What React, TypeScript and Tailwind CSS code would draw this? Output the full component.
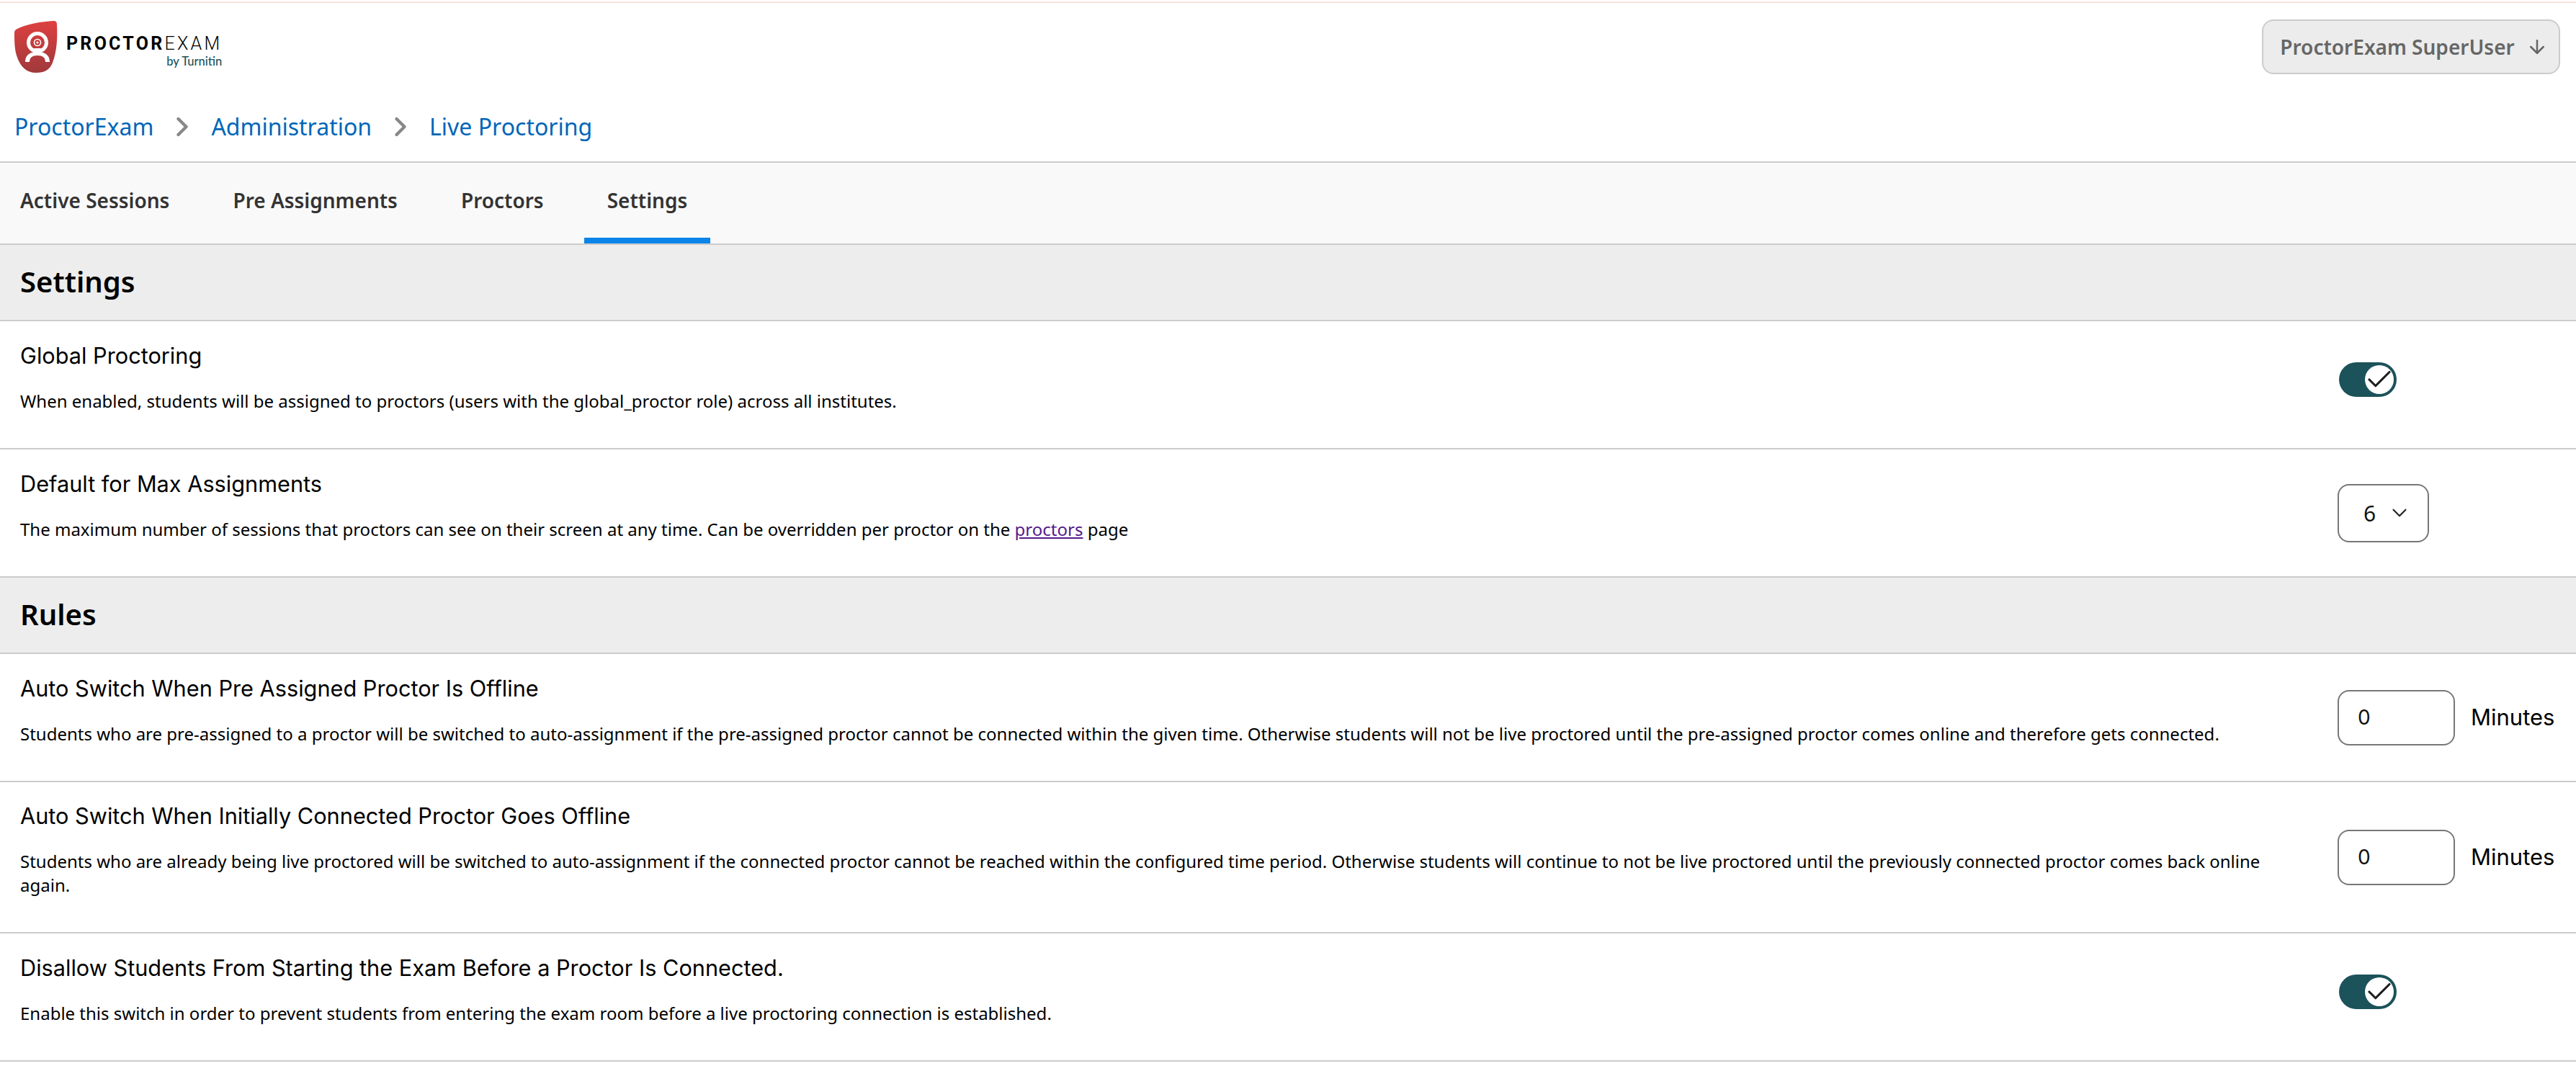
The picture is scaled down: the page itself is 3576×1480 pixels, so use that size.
import React from 'react';
import { ArrowDown, ChevronDown, ChevronRight, Check } from 'lucide-react';

function Logo() {
  return (
    <svg width="60" height="72" viewBox="0 0 60 72" className="shrink-0">
      <defs>
        <linearGradient id="shield" x1="0" y1="0" x2="0" y2="1">
          <stop offset="0" stopColor="#de4040" />
          <stop offset="1" stopColor="#a0393b" />
        </linearGradient>
      </defs>
      <path d="M4 11C18 4 38 1 54 0C58 0 59 2 59 5C60 24 59 42 53 58C49 68 42 72 30 72C17 72 8 64 3 48C0 38 0 26 0 17C0 14 1 12 4 11Z" fill="url(#shield)" />
      <circle cx="32" cy="30" r="12.5" fill="none" stroke="#fff" strokeWidth="5" />
      <circle cx="32" cy="30" r="4.5" fill="none" stroke="#fff" strokeWidth="1.6" />
      <circle cx="32" cy="30" r="1.6" fill="#fff" />
      <path d="M15 57C15 47 22 43 32 43C42 43 49 47 49 57H43C43 51 39 48 32 48C25 48 21 51 21 57Z" fill="#fff" />
      <path d="M24 40L28 44H36L40 40L36 38H28Z" fill="#fff" />
    </svg>
  );
}

function Toggle() {
  return (
    <div className="mb-3.5 ml-0.5 flex h-12 w-20 items-center justify-end rounded-full bg-[#1c525a] pr-1">
      <div className="flex h-10 w-10 items-center justify-center rounded-full bg-white">
        <Check size={42} strokeWidth={1.8} className="shrink-0 text-[#1f1f1f]" />
      </div>
    </div>
  );
}

function MinutesInput() {
  return (
    <div className="flex items-center gap-6">
      <div className="flex h-[77px] w-[163px] items-center rounded-2xl border-2 border-[#777] pl-[26px] font-['Inter'] text-[28px] text-[#111]">0</div>
      <span className="-ml-0.5 font-['Inter'] text-[31px] text-black">Minutes</span>
    </div>
  );
}

function SectionHeader({ title }: { title: string }) {
  return (
    <div className="flex h-[106px] items-center border-b-2 border-[#ccc] bg-[#ededed] pb-0.5 pl-7">
      <h2 className="text-[40px] font-semibold text-black">{title}</h2>
    </div>
  );
}

function Row({ title, height, control, children }: { title: string; height: string; control: React.ReactNode; children: React.ReactNode }) {
  return (
    <div className={`flex items-center border-b-2 border-[#ccc] pl-7 ${height}`}>
      <div className="w-[3217px] shrink-0 pr-[90px] pb-[22px]">
        <h3 className="font-['Inter'] text-[30.7px] leading-10 text-black">{title}</h3>
        <p className="mt-[26px] text-[24px] leading-[33px] text-black">{children}</p>
      </div>
      {control}
    </div>
  );
}

export default function App() {
  const tabs = ['Active Sessions', 'Pre Assignments', 'Proctors', 'Settings'];

  return (
    <div className="min-h-[1480px] bg-white pt-0.5 font-['Noto_Sans',sans-serif]">
      <div className="h-0.5 bg-[#fbe3df]" />

      <header className="flex h-[121px] items-center justify-between pr-[22px] pl-5">
        <div className="flex items-start gap-3">
          <Logo />
          <div className="flex flex-col items-end pt-[18px]">
            <span className="font-['Roboto'] text-[25px] leading-7 tracking-[0.13em] text-black"><b className="font-bold">PROCTOR</b><span className="font-light">EXAM</span></span>
            <span className="font-['Lato'] text-[16.5px] leading-5 font-medium text-[#1c525a]">by Turnitin</span>
          </div>
        </div>
        <button className="flex h-[76px] w-[414px] items-center justify-center gap-4 rounded-2xl border-2 border-[#ccc] bg-[#ececec] pl-2 text-[28px] font-semibold text-[#666]">
          ProctorExam SuperUser <ArrowDown size={30} strokeWidth={2} className="text-[#666]" />
        </button>
      </header>

      <nav className="flex h-[101px] items-start gap-[18px] border-b-2 border-[#ccc] pt-[26px] pl-5 text-[32px] leading-[50px] text-[#0066b8]">
        <a>ProctorExam</a>
        <ChevronRight size={44} strokeWidth={2.4} className="mt-[3px] text-[#888]" />
        <a>Administration</a>
        <ChevronRight size={44} strokeWidth={2.4} className="mt-[3px] text-[#888]" />
        <a>Live Proctoring</a>
      </nav>

      <div className="flex h-[114px] border-b-2 border-[#ccc] bg-[#f9f9f9]">
        {tabs.map((t) =>
          t === 'Settings' ? (
            <div key={t} className="-ml-1 flex items-center border-b-8 border-[#0a84e8] px-8 text-[28px] font-semibold text-[#333]">
              {t}
            </div>
          ) : (
            <div key={t} className="mr-8 flex items-center px-7 pb-2 text-[28px] font-semibold text-[#333]">
              {t}
            </div>
          ),
        )}
      </div>

      <SectionHeader title="Settings" />
      <Row title="Global Proctoring" height="h-[178px]" control={<Toggle />}>
        When enabled, students will be assigned to proctors (users with the global_proctor role) across all institutes.
      </Row>
      <Row
        title="Default for Max Assignments"
        height="h-[178px]"
        control={
          <div className="flex h-[81px] w-[127px] items-center gap-4 rounded-2xl border-2 border-[#777] pl-[34px] text-[30px] text-[#111]">
            6 <ChevronDown size={34} strokeWidth={1.5} className="text-[#222]" />
          </div>
        }
      >
        The maximum number of sessions that proctors can see on their screen at any time. Can be overridden per proctor on the <a className="text-[#551a8b] underline">proctors</a> page
      </Row>

      <SectionHeader title="Rules" />
      <Row title="Auto Switch When Pre Assigned Proctor Is Offline" height="h-[178px]" control={<MinutesInput />}>
        Students who are pre-assigned to a proctor will be switched to auto-assignment if the pre-assigned proctor cannot be connected within the given time. Otherwise students will not be live proctored until the pre-assigned proctor comes online and therefore gets connected.
      </Row>
      <Row title="Auto Switch When Initially Connected Proctor Goes Offline" height="h-[210px]" control={<MinutesInput />}>
        Students who are already being live proctored will be switched to auto-assignment if the connected proctor cannot be reached within the configured time period. Otherwise students will continue to not be live proctored until the previously connected proctor comes back online again.
      </Row>
      <Row title="Disallow Students From Starting the Exam Before a Proctor Is Connected." height="h-[178px]" control={<Toggle />}>
        Enable this switch in order to prevent students from entering the exam room before a live proctoring connection is established.
      </Row>
    </div>
  );
}
